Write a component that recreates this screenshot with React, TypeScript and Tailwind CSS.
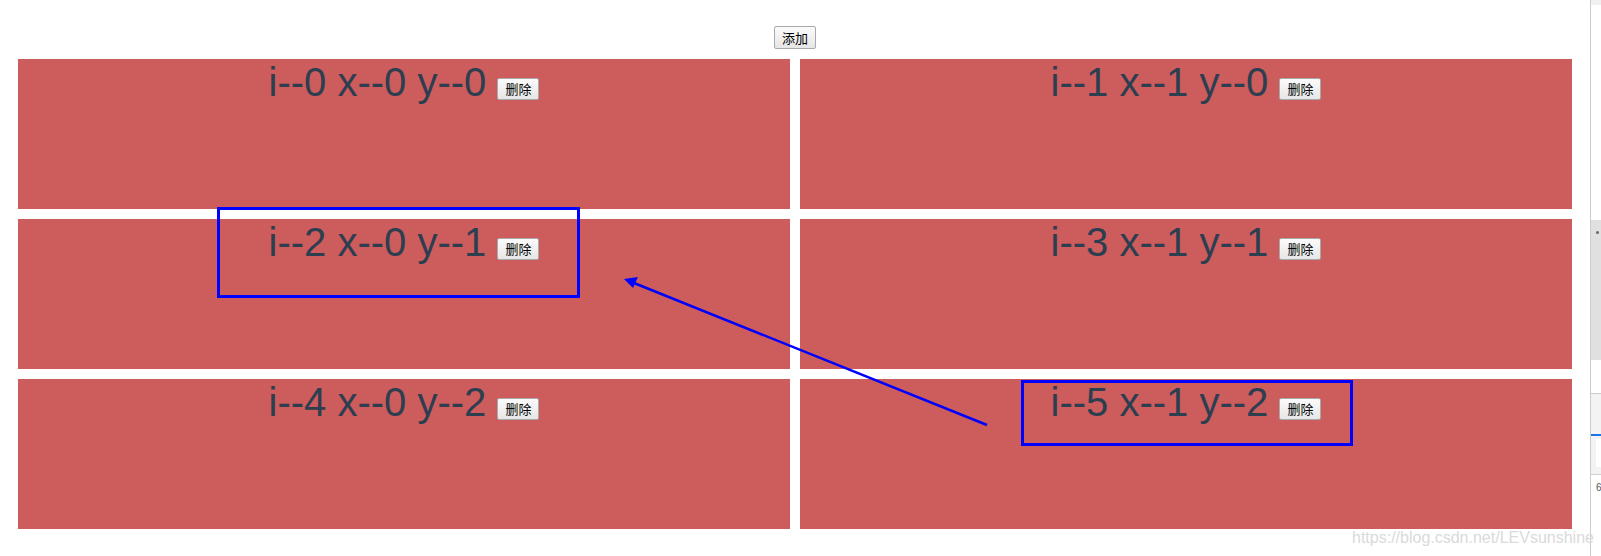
import React, { useState } from "react";

type Item = { i: number; x: number; y: number };

const initial: Item[] = [
  { i: 0, x: 0, y: 0 },
  { i: 1, x: 1, y: 0 },
  { i: 2, x: 0, y: 1 },
  { i: 3, x: 1, y: 1 },
  { i: 4, x: 0, y: 2 },
  { i: 5, x: 1, y: 2 },
];

const btn =
  "inline-flex items-center justify-center px-[6px] text-[13px] text-black border border-[#a9a9a9] rounded-[2px] bg-gradient-to-b from-[#fbfbfb] to-[#e6e6e6] [font-family:'Noto_Sans_CJK_SC',sans-serif] leading-none";

function GridCell({ item, onDelete }: { item: Item; onDelete: (i: number) => void }) {
  return (
    <div className="h-[150px] bg-[#cd5c5c] text-center text-[40px] leading-[46px] text-[#2c3e50]">
      <span>{`i--${item.i} x--${item.x} y--${item.y}`}</span>{" "}
      <button className={`${btn} h-[22px] w-[42px] align-[2px]`} onClick={() => onDelete(item.i)}>
        删除
      </button>
    </div>
  );
}

// barra lateral do devtools cortada na borda direita
function SideStrip() {
  return (
    <div className="flex w-[11px] flex-col overflow-hidden border-l border-[#cccccc] bg-white">
      <div className="h-[5px] bg-[#f1f1f1]" />
      <div className="h-[215px]" />
      <div className="flex h-[140px] items-start bg-[#e0e0e0] pl-[5px] pt-[11px]">
        <div className="h-[3px] w-[3px] rounded-full bg-[#666]" />
      </div>
      <div className="h-[34px] border-b border-[#cccccc]" />
      <div className="h-[40px] bg-[#f3f3f3]" />
      <div className="h-[2px] bg-[#1a73e8]" />
      <div className="flex h-[38px] bg-[#f3f3f3] pt-[3px] pl-[5px]">
        <div className="h-[28px] flex-1 bg-white" />
      </div>
      <div className="border-t border-[#d0d0d0] pl-[5px] pt-[8px] text-[10px] leading-none text-[#555]">6</div>
    </div>
  );
}

export default function App() {
  const [items, setItems] = useState<Item[]>(initial);

  const add = () => {
    const n = items.length ? Math.max(...items.map(t => t.i)) + 1 : 0;
    setItems([...items, { i: n, x: n % 2, y: Math.floor(n / 2) }]);
  };

  return (
    <div className="relative flex h-[556px] w-[1601px] overflow-hidden bg-white [font-family:'Liberation_Sans',Arial,sans-serif]">
      <div className="w-[1590px] px-[18px] pt-[26px]">
        <div className="flex justify-center">
          <button className={`${btn} h-[23px] w-[42px]`} onClick={add}>
            添加
          </button>
        </div>
        <div className="mt-[10px] grid grid-cols-2 gap-[10px]">
          {items.map(item => (
            <GridCell key={item.i} item={item} onDelete={i => setItems(items.filter(t => t.i !== i))} />
          ))}
        </div>
      </div>
      <SideStrip />

      {/* marcações azuis do print */}
      <svg className="pointer-events-none absolute left-0 top-0" width="1601" height="556">
        <rect x="218.5" y="208.5" width="360" height="88" fill="none" stroke="#0000ff" strokeWidth="3" />
        <rect x="1022.5" y="381.5" width="329" height="63" fill="none" stroke="#0000ff" strokeWidth="3" />
        <line x1="987" y1="425" x2="634" y2="283" stroke="#0000ff" strokeWidth="2.5" />
        <polygon points="624,279 638,277 633,288" fill="#0000ff" />
      </svg>

      <div className="pointer-events-none absolute left-[1352px] top-[529px] text-[16px] leading-[18px] text-[#dadada]">
        https://blog.csdn.net/LEVsunshine
      </div>
    </div>
  );
}
